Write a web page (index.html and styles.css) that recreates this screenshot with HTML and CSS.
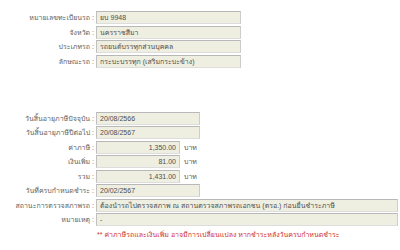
FILE: index.html
```html
<!DOCTYPE html>
<html lang="th">
<head>
<meta charset="utf-8">
<link rel="stylesheet" href="styles.css">
</head>
<body>
<div class="page">
  <div class="section sec-top">
    <div class="row"><div class="label">หมายเลขทะเบียนรถ :</div><div class="box w-top">ยบ 9948</div></div>
    <div class="row"><div class="label">จังหวัด :</div><div class="box w-top">นครราชสีมา</div></div>
    <div class="row"><div class="label">ประเภทรถ :</div><div class="box w-top">รถยนต์บรรทุกส่วนบุคคล</div></div>
    <div class="row"><div class="label">ลักษณะรถ :</div><div class="box w-top">กระบะบรรทุก (เสริมกระบะข้าง)</div></div>
  </div>
  <div class="section sec-bottom">
    <div class="row"><div class="label">วันสิ้นอายุภาษีปัจจุบัน :</div><div class="box w-date">20/08/2566</div></div>
    <div class="row"><div class="label">วันสิ้นอายุภาษีปีต่อไป :</div><div class="box w-date">20/08/2567</div></div>
    <div class="row"><div class="label">ค่าภาษี :</div><div class="box w-money num">1,350.00</div><span class="unit">บาท</span></div>
    <div class="row"><div class="label">เงินเพิ่ม :</div><div class="box w-money num">81.00</div><span class="unit">บาท</span></div>
    <div class="row"><div class="label">รวม :</div><div class="box w-money num">1,431.00</div><span class="unit">บาท</span></div>
    <div class="row"><div class="label">วันที่ครบกำหนดชำระ :</div><div class="box w-date">20/02/2567</div></div>
    <div class="row"><div class="label">สถานะการตรวจสภาพรถ :</div><div class="box w-full">ต้องนำรถไปตรวจสภาพ ณ สถานตรวจสภาพรถเอกชน (ตรอ.) ก่อนยื่นชำระภาษี</div></div>
    <div class="row"><div class="label">หมายเหตุ :</div><div class="box w-full">-</div></div>
    <div class="note">** ค่าภาษีรถและเงินเพิ่ม อาจมีการเปลี่ยนแปลง หากชำระหลังวันครบกำหนดชำระ</div>
  </div>
</div>
</body>
</html>
```
FILE: styles.css
```css
html, body {
  margin: 0;
  padding: 0;
  background: #ffffff;
}
.page {
  font-family: "Liberation Sans", Tahoma, Loma, "Noto Sans Thai", "Noto Sans", sans-serif;
  font-size: 7px;
  color: #5e5e5e;
}
.section {
  display: flex;
  flex-direction: column;
  gap: 1.5px;
}
.sec-top {
  padding-top: 11px;
}
.sec-bottom {
  padding-top: 44px;
}
.row {
  display: flex;
  align-items: center;
  height: 13px;
}
.label {
  width: 96px;
  flex: none;
  text-align: right;
  padding-right: 2px;
  box-sizing: border-box;
  white-space: nowrap;
  color: #626262;
}
.box {
  flex: none;
  box-sizing: border-box;
  height: 13px;
  line-height: 11px;
  padding: 0 3px;
  background: #efefe1;
  border: 1px solid #cccccc;
  border-top-color: #b8b8b8;
  border-left-color: #c0c0c0;
  border-bottom-color: #dddddd;
  color: #4e4e4e;
  white-space: nowrap;
  overflow: hidden;
}
.w-top { width: 145px; }
.w-date { width: 104px; }
.w-money { width: 84px; }
.w-full { width: 302px; }
.num { text-align: right; }
.unit {
  margin-left: 4px;
  color: #626262;
}
.note {
  margin-top: 1px;
  padding-left: 97px;
  color: #d03030;
  white-space: nowrap;
}
```
